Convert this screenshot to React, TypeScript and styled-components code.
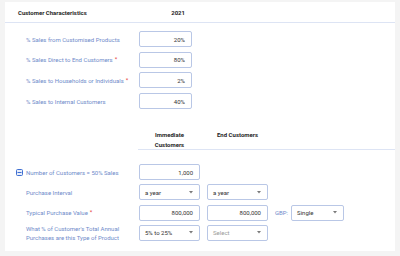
import React from 'react';
import styled, { createGlobalStyle } from 'styled-components';

const Colors = {
  page: '#f4f4f4',
  white: '#ffffff',
  line: '#dde4f4',
  label: '#6f8bca',
  border: '#b9c7e6',
  text: '#333333',
  heading: '#1f1f1f',
  red: '#e53935',
  muted: '#9a9a9a',
  caret: '#7a7a7a',
  icon: '#3f6fd1',
};

const GlobalStyle = createGlobalStyle`
  html, body {
    margin: 0;
    padding: 0;
    background: ${Colors.page};
  }
  body {
    font-family: Roboto, 'Liberation Sans', sans-serif;
    font-size: 6px;
  }
`;

const topRows = [
  { label: '% Sales from Customised Products', value: '20%' },
  { label: '% Sales Direct to End Customers', value: '80%', required: true },
  { label: '% Sales to Households or Individuals', value: '2%', required: true },
  { label: '% Sales to Internal Customers', value: '40%' },
];

const Caret = () => (
  <svg width="4" height="3" viewBox="0 0 4 3">
    <path d="M0 0 L4 0 L2 2.5 Z" fill={Colors.caret} />
  </svg>
);

const CollapseIcon = () => (
  <svg width="7" height="7" viewBox="0 0 7 7">
    <rect x="0.5" y="0.5" width="6" height="6" rx="1" fill="#e8eefb" stroke={Colors.icon} />
    <path d="M1.5 3.5 H5.5" stroke={Colors.icon} strokeWidth="1" />
  </svg>
);

const Select = ({ value, placeholder, width }: { value?: string; placeholder?: string; width: number }) => (
  <SelectBox width={width}>
    <SelectText placeholder={!value}>{value || placeholder}</SelectText>
    <Caret />
  </SelectBox>
);

const App = () => {
  return (
    <Page>
      <GlobalStyle />
      <Card>
        <TitleBar>
          <TitleCell>Customer Characteristics</TitleCell>
          <YearCell>2021</YearCell>
        </TitleBar>

        <TopSection>
          {topRows.map((row) => (
            <TopRow key={row.label}>
              <Label>
                {row.label}
                {row.required && <Star>*</Star>}
              </Label>
              <ValueBox width={53}>{row.value}</ValueBox>
            </TopRow>
          ))}
        </TopSection>

        <ColumnHeader>
          <HeaderCell>
            Immediate
            <br />
            Customers
          </HeaderCell>
          <HeaderCell>End Customers</HeaderCell>
        </ColumnHeader>

        <BottomSection>
          <BottomRow>
            <Label>
              <IconWrap>
                <CollapseIcon />
              </IconWrap>
              Number of Customers = 50% Sales
            </Label>
            <ValueBox width={61}>1,000</ValueBox>
          </BottomRow>
          <BottomRow>
            <Label>Purchase Interval</Label>
            <Select value="a year" width={61} />
            <Select value="a year" width={61} />
          </BottomRow>
          <BottomRow>
            <Label>
              Typical Purchase Value
              <Star>*</Star>
            </Label>
            <ValueBox width={61}>800,000</ValueBox>
            <ValueBox width={61}>800,000</ValueBox>
            <Currency>GBP:</Currency>
            <Select value="Single" width={53} />
          </BottomRow>
          <BottomRow>
            <Label>
              What % of Customer's Total Annual
              <br />
              Purchases are this Type of Product
            </Label>
            <Select value="5% to 25%" width={61} />
            <Select placeholder="Select" width={61} />
          </BottomRow>
        </BottomSection>
      </Card>
    </Page>
  );
};

const Page = styled.div`
  padding: 2px 5px 0 5px;
  height: 256px;
  box-sizing: border-box;
`;

const Card = styled.div`
  background: ${Colors.white};
  height: 249px;
`;

const TitleBar = styled.div`
  display: flex;
  align-items: center;
  height: 20px;
  padding-left: 13px;
  border-bottom: 1px solid ${Colors.line};
  font-weight: 700;
  color: ${Colors.heading};
`;

const TitleCell = styled.div`
  width: 121px;
`;

const YearCell = styled.div`
  width: 53px;
  padding-right: 7px;
  box-sizing: border-box;
  text-align: right;
`;

const TopSection = styled.div`
  display: flex;
  flex-direction: column;
  gap: 4.7px;
  padding: 8px 0 0 21px;
`;

const TopRow = styled.div`
  display: flex;
  align-items: center;
  height: 16px;
`;

const Label = styled.div`
  display: flex;
  align-items: center;
  width: 113px;
  color: ${Colors.label};
  line-height: 9px;
`;

const Star = styled.span`
  color: ${Colors.red};
  margin-left: 2px;
  align-self: flex-start;
  line-height: 7px;
`;

const IconWrap = styled.span`
  display: flex;
  margin-left: -10px;
  margin-right: 3px;
`;

const ValueBox = styled.div<{ width: number }>`
  width: ${(p) => p.width}px;
  height: 16px;
  box-sizing: border-box;
  border: 1px solid ${Colors.border};
  border-radius: 2px;
  padding-right: 6px;
  display: flex;
  align-items: center;
  justify-content: flex-end;
  color: ${Colors.text};
`;

const SelectBox = styled.div<{ width: number }>`
  width: ${(p) => p.width}px;
  height: 16px;
  box-sizing: border-box;
  border: 1px solid ${Colors.border};
  border-radius: 2px;
  padding: 0 6px 0 5px;
  display: flex;
  align-items: center;
  justify-content: space-between;
`;

const SelectText = styled.span<{ placeholder?: boolean }>`
  color: ${(p) => (p.placeholder ? Colors.muted : Colors.text)};
`;

const ColumnHeader = styled.div`
  display: flex;
  gap: 7px;
  margin: 21px 0 0 133px;
  padding-left: 1px;
  height: 19px;
  border-bottom: 1px solid ${Colors.line};
  font-weight: 700;
  color: ${Colors.heading};
`;

const HeaderCell = styled.div`
  width: 61px;
  text-align: center;
  line-height: 10px;
`;

const BottomSection = styled.div`
  display: flex;
  flex-direction: column;
  gap: 4.3px;
  padding: 14px 0 0 21px;
`;

const BottomRow = styled.div`
  display: flex;
  align-items: center;
  gap: 7px;
  height: 16px;

  & > ${Label} {
    margin-right: -7px;
  }
`;

const Currency = styled.span`
  color: ${Colors.label};
  margin-right: -4px;
`;

export default App;
